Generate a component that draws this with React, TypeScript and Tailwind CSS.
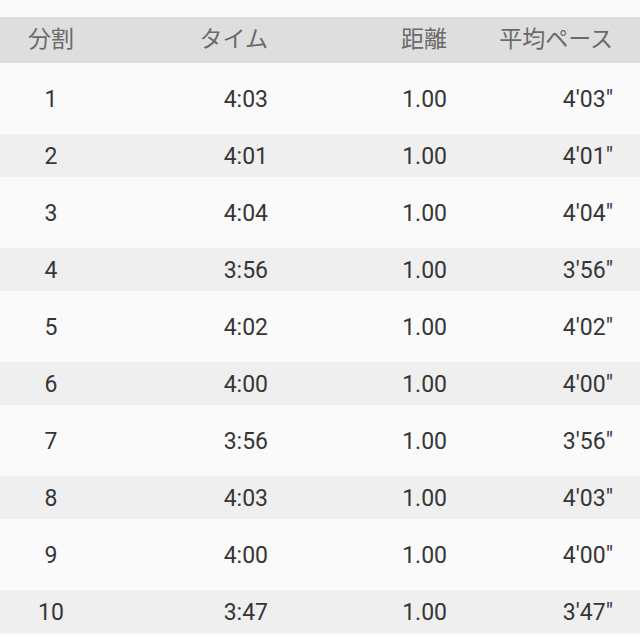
const splits = [
  { n: 1, time: "4:03", dist: "1.00", pace: "4'03\"" },
  { n: 2, time: "4:01", dist: "1.00", pace: "4'01\"" },
  { n: 3, time: "4:04", dist: "1.00", pace: "4'04\"" },
  { n: 4, time: "3:56", dist: "1.00", pace: "3'56\"" },
  { n: 5, time: "4:02", dist: "1.00", pace: "4'02\"" },
  { n: 6, time: "4:00", dist: "1.00", pace: "4'00\"" },
  { n: 7, time: "3:56", dist: "1.00", pace: "3'56\"" },
  { n: 8, time: "4:03", dist: "1.00", pace: "4'03\"" },
  { n: 9, time: "4:00", dist: "1.00", pace: "4'00\"" },
  { n: 10, time: "3:47", dist: "1.00", pace: "3'47\"" },
];

export default function App() {
  return (
    <div
      className="h-[635px] w-[640px] overflow-hidden bg-[#fafafa] pt-[17px]"
      style={{ fontFamily: 'Roboto, "Noto Sans CJK JP", sans-serif' }}
    >
      {/* Header */}
      <div className="flex h-[46px] items-center bg-[#dedede] text-[23px] text-[#6a6a6a]">
        <div className="w-[102px] text-center">分割</div>
        <div className="w-[166px] text-right">タイム</div>
        <div className="w-[179px] text-right">距離</div>
        <div className="w-[166px] text-right">平均ペース</div>
      </div>

      {/* Rows */}
      {splits.map((s, i) => (
        <div
          key={s.n}
          className={
            i % 2 === 0
              ? "flex h-[71px] items-center bg-[#fafafa] pt-[4px] text-[23px] text-[#363636]"
              : "flex h-[43px] items-center bg-[#efefef] pt-[4px] text-[23px] text-[#363636]"
          }
        >
          <div className="w-[102px] text-center">{s.n}</div>
          <div className="w-[166px] text-right">{s.time}</div>
          <div className="w-[179px] text-right">{s.dist}</div>
          <div className="w-[166px] text-right">{s.pace}</div>
        </div>
      ))}
    </div>
  );
}
